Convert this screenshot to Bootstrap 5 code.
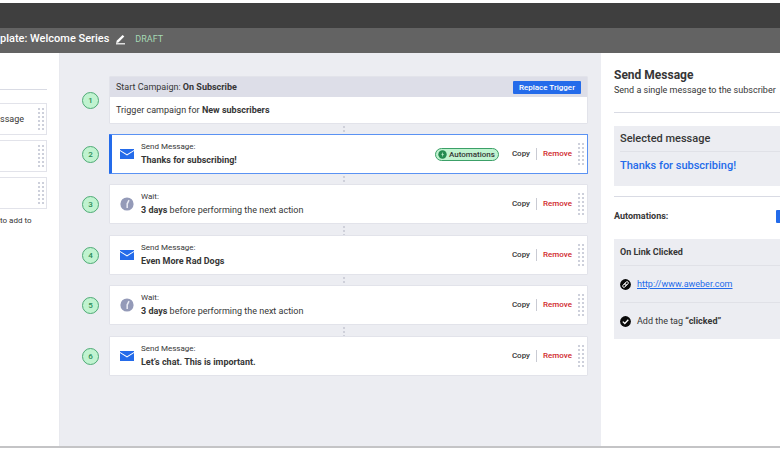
<!DOCTYPE html>
<html lang="en">
<head>
<meta charset="utf-8">
<meta name="viewport" content="width=device-width, initial-scale=1">
<title>Campaign: Welcome Series</title>
<link href="https://cdn.jsdelivr.net/npm/bootstrap@5.3.0/dist/css/bootstrap.min.css" rel="stylesheet">
<style>
  :root { --blue: #246bea; --ink: #363636; --canvas: #ecedf2; --line: #e2e3ea; }
  body { font-family: Roboto, "Liberation Sans", sans-serif; font-size: 9px; line-height: 14px; color: var(--ink); background: #fff; }
  button { font-family: inherit; color: inherit; }
  h1, h2, h3, h4 { margin: 0; font-weight: 700; }
  hr { margin: 0; border-color: #d9dbe4; opacity: 1; }
  .topbar { height: 25px; margin-top: 3px; background: #3f3f3f; }
  .titlebar { height: 25px; padding-bottom: 3px; background: #636363; color: #fff; }
  .titlebar h1 { font-size: 11px; line-height: 14px; font-weight: 500; }
  .pencil { margin: 0 9px 0 6px; }
  .draft { color: #a5d9b4; }
  .shell { border-bottom: 2px solid #c4c4c6; margin-bottom: 3px; }
  .palette { width: 60px; border-right: 1px solid #e8e9ee; padding: 36px 12px 0 0; }
  .palette-item { height: 32px; border: 1px solid var(--line); border-left: 0; margin-bottom: 5px; padding-right: 2px; }
  .palette hr { margin-bottom: 13px; }
  .palette-note { font-size: 8px; line-height: 12px; padding-top: 1px; }
  .flow { background: var(--canvas); padding: 23px 13px 70px 22px; }
  .step-row { gap: 10px; }
  .num { width: 17px; height: 17px; border: 1px solid #4faa76; border-radius: 50%; background: #c0f3d0; color: #2b8a55; font-size: 8px; line-height: 15px; font-weight: 500; text-align: center; }
  .step { background: #fff; border: 1px solid var(--line); border-radius: 1px; min-width: 0; }
  .step-body { height: 40px; padding: 0 3px 0 10px; }
  .step-body.active { border: 1px solid #5a92f3; border-left: 3px solid var(--blue); padding-left: 8px; }
  .step-icon { width: 14px; height: 14px; margin-right: 7px; }
  .kind { font-size: 8px; line-height: 12px; }
  .trigger-head { height: 20px; padding: 0 6px; background: #dddee8; }
  .trigger-text { height: 26px; padding: 0 6px; }
  .btn-trigger { background: var(--blue); color: #fff; border: 0; border-radius: 1px; font-size: 8px; line-height: 13px; font-weight: 500; padding: 0 6px; }
  .plain { background: none; border: 0; padding: 0; font-size: 8px; line-height: 12px; font-weight: 500; }
  .remove { color: #d0272b; border-left: 1px solid #c9cbd3; padding-left: 6px; margin: 0 5px 0 6px; }
  .auto-tag { border: 1px solid #3ca068; border-radius: 7px; background: #c0f3d0; font-size: 8px; line-height: 11px; font-weight: 500; padding: 0 3px 0 2px; margin-right: 13px; gap: 2px; }
  .grip { width: 7px; height: 24px; background: radial-gradient(circle at 2px 2px, #cccfda 0 0.7px, transparent 1px) 0 0 / 4px 4px; }
  .joint { height: 10px; margin-left: 18px; background: radial-gradient(circle at 2px 2px, #cdcfd9 0 0.7px, transparent 1px) center 1px / 4px 4px repeat-y; }
  .joint-tall { height: 11px; }
  .details { width: 179px; padding: 14px 0 0 13px; }
  .details h2 { font-size: 12px; line-height: 16px; }
  .details h3 { font-size: 11px; line-height: 25px; font-weight: 500; }
  .details h4 { font-size: 9px; line-height: 14px; }
  .lead-in { margin-bottom: 15px; }
  .panel { background: var(--canvas); padding-left: 6px; }
  .panel hr { border-color: #e0e1e7; }
  .selected { margin: 13px 0 10px; padding-bottom: 6px; }
  .selected .chosen { color: var(--blue); line-height: 28px; }
  .auto-head { padding: 12px 0 16px; }
  .auto-head h4 { flex: 1 0 162px; }
  .add-btn { flex: none; background: var(--blue); border: 0; width: 64px; height: 13px; border-radius: 1px; }
  .panel .rule-title { line-height: 26px; }
  .rule-line { gap: 6px; height: 36px; }
  .url { color: var(--blue); }
</style>
<script src="https://cdn.jsdelivr.net/npm/bootstrap@5.3.0/dist/js/bootstrap.bundle.min.js"></script>
</head>
<body class="d-flex flex-column min-vh-100">
<svg class="d-none" aria-hidden="true">
  <symbol id="mail" viewBox="0 0 14 14"><path fill="#246bea" d="M0 2h14v.9L7 7.2 0 2.9zM0 4.1l7 4.3 7-4.3V12H0z"/></symbol>
  <symbol id="clock" viewBox="0 0 14 14"><circle cx="7" cy="7" r="6.6" fill="#949ab8"/><path d="M9 3.2 7.2 6.8V11" fill="none" stroke="#e9ebf4" stroke-width="1.5"/></symbol>
</svg>
<header>
  <div class="topbar"></div>
  <div class="titlebar d-flex align-items-center text-nowrap">
    <h1>plate: Welcome Series</h1>
    <svg class="pencil" width="11" height="11" viewBox="0 0 11 11" aria-hidden="true"><path d="m1.2 9 .5-2.3L7.6.9l1.7 1.6-5.9 5.9z" fill="#fff"/><path d="M1 9.8h9" stroke="#fff" stroke-width="1.2"/></svg>
    <span class="draft">DRAFT</span>
  </div>
</header>
<div class="shell d-flex flex-grow-1">
  <aside class="palette flex-shrink-0 text-nowrap">
    <hr>
    <div class="palette-item d-flex align-items-center justify-content-between"><span>ssage</span><span class="grip"></span></div>
    <div class="palette-item d-flex align-items-center justify-content-end"><span class="grip"></span></div>
    <div class="palette-item d-flex align-items-center justify-content-end"><span class="grip"></span></div>
    <div class="palette-note">to add to</div>
  </aside>

  <main class="flow flex-grow-1 text-nowrap">
    <div class="step-row d-flex align-items-center">
      <div class="num">1</div>
      <div class="step flex-grow-1">
        <div class="trigger-head d-flex align-items-center justify-content-between"><div>Start Campaign: <b>On Subscribe</b></div><button type="button" class="btn-trigger">Replace Trigger</button></div>
        <div class="trigger-text d-flex align-items-center"><div>Trigger campaign for <b>New subscribers</b></div></div>
      </div>
    </div>
    <div class="joint"></div>
    <div class="step-row d-flex align-items-center">
      <div class="num">2</div>
      <div class="step step-body active flex-grow-1 d-flex align-items-center">
        <svg class="step-icon" aria-hidden="true"><use href="#mail"/></svg>
        <div class="me-auto"><div class="kind">Send Message:</div><b>Thanks for subscribing!</b></div>
        <span class="auto-tag d-flex align-items-center"><svg width="9" height="9" viewBox="0 0 9 9" aria-hidden="true"><circle cx="4.5" cy="4.5" r="4.2" fill="#248a50"/><path d="M5.2 1.8 3.2 4.8h1.2l-.5 2.5 2-3.2H4.7z" fill="#c0f3d0"/></svg>Automations</span>
        <button type="button" class="plain">Copy</button><button type="button" class="plain remove">Remove</button><span class="grip"></span>
      </div>
    </div>
    <div class="joint"></div>
    <div class="step-row d-flex align-items-center">
      <div class="num">3</div>
      <div class="step step-body flex-grow-1 d-flex align-items-center">
        <svg class="step-icon" aria-hidden="true"><use href="#clock"/></svg>
        <div class="me-auto"><div class="kind">Wait:</div><b>3 days</b> before performing the next action</div>
        <button type="button" class="plain">Copy</button><button type="button" class="plain remove">Remove</button><span class="grip"></span>
      </div>
    </div>
    <div class="joint joint-tall"></div>
    <div class="step-row d-flex align-items-center">
      <div class="num">4</div>
      <div class="step step-body flex-grow-1 d-flex align-items-center">
        <svg class="step-icon" aria-hidden="true"><use href="#mail"/></svg>
        <div class="me-auto"><div class="kind">Send Message:</div><b>Even More Rad Dogs</b></div>
        <button type="button" class="plain">Copy</button><button type="button" class="plain remove">Remove</button><span class="grip"></span>
      </div>
    </div>
    <div class="joint"></div>
    <div class="step-row d-flex align-items-center">
      <div class="num">5</div>
      <div class="step step-body flex-grow-1 d-flex align-items-center">
        <svg class="step-icon" aria-hidden="true"><use href="#clock"/></svg>
        <div class="me-auto"><div class="kind">Wait:</div><b>3 days</b> before performing the next action</div>
        <button type="button" class="plain">Copy</button><button type="button" class="plain remove">Remove</button><span class="grip"></span>
      </div>
    </div>
    <div class="joint joint-tall"></div>
    <div class="step-row d-flex align-items-center">
      <div class="num">6</div>
      <div class="step step-body flex-grow-1 d-flex align-items-center">
        <svg class="step-icon" aria-hidden="true"><use href="#mail"/></svg>
        <div class="me-auto"><div class="kind">Send Message:</div><b>Let’s chat. This is important.</b></div>
        <button type="button" class="plain">Copy</button><button type="button" class="plain remove">Remove</button><span class="grip"></span>
      </div>
    </div>
  </main>

  <aside class="details flex-shrink-0 overflow-hidden text-nowrap">
    <h2>Send Message</h2>
    <div class="lead-in">Send a single message to the subscriber</div>
    <hr>
    <div class="panel selected">
      <h3>Selected message</h3>
      <hr>
      <h3 class="chosen">Thanks for subscribing!</h3>
    </div>
    <hr>
    <div class="auto-head d-flex align-items-center">
      <h4>Automations:</h4><button type="button" class="add-btn" aria-label="Add automation"></button>
    </div>
    <div class="panel">
      <h4 class="rule-title">On Link Clicked</h4>
      <hr>
      <div class="rule-line d-flex align-items-center"><svg width="11" height="11" viewBox="0 0 11 11" aria-hidden="true"><circle cx="5.5" cy="5.5" r="5.4" fill="#090909"/><g fill="none" stroke="#fff" stroke-width=".9" transform="rotate(-45 5.5 5.5)"><rect x="2" y="4.2" width="4.2" height="2.6" rx="1.3"/><rect x="4.8" y="4.2" width="4.2" height="2.6" rx="1.3"/></g></svg><a class="url" href="http://www.aweber.com">http://www.aweber.com</a></div>
      <hr>
      <div class="rule-line d-flex align-items-center"><svg width="11" height="11" viewBox="0 0 11 11" aria-hidden="true"><circle cx="5.5" cy="5.5" r="5.4" fill="#090909"/><path d="m2.8 5.6 2 1.9 3.5-3.8" fill="none" stroke="#fff" stroke-width="1.3"/></svg><div>Add the tag <b>“clicked”</b></div></div>
    </div>
  </aside>
</div>
</body>
</html>
